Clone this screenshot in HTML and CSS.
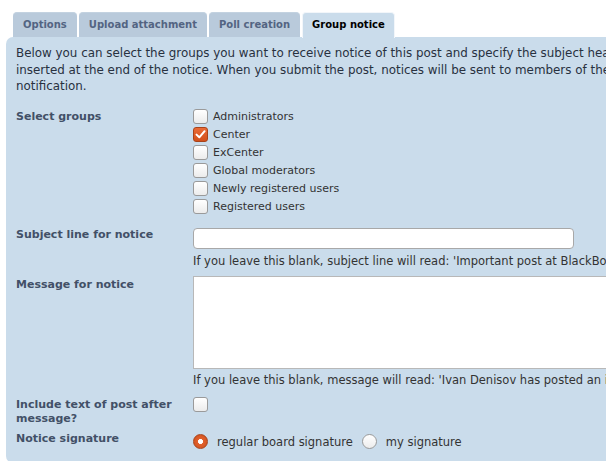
FILE: index.html
```html
<!DOCTYPE html>
<html>
<head>
<meta charset="utf-8">
<link rel="stylesheet" href="styles.css">
</head>
<body>
<div class="page">
  <ul class="tabs">
    <li class="tab">Options</li>
    <li class="tab">Upload attachment</li>
    <li class="tab">Poll creation</li>
    <li class="tab active">Group notice</li>
  </ul>
  <div class="panel">
    <p class="intro">Below you can select the groups you want to receive notice of this post and specify the subject heading and message text. A link to the post will be<br>inserted at the end of the notice. When you submit the post, notices will be sent to members of the selected groups who have chosen to receive<br>notification.</p>

    <div class="row row-groups">
      <div class="label">Select groups</div>
      <div class="value">
        <div class="opt"><span class="cb"></span>Administrators</div>
        <div class="opt"><span class="cb checked"><svg viewBox="0 0 15 15" width="15" height="15"><path d="M3.5 7.6 L6.3 10.3 L11.6 4.2" fill="none" stroke="#fff" stroke-width="2" stroke-linecap="round" stroke-linejoin="round"/></svg></span>Center</div>
        <div class="opt"><span class="cb"></span>ExCenter</div>
        <div class="opt"><span class="cb"></span>Global moderators</div>
        <div class="opt"><span class="cb"></span>Newly registered users</div>
        <div class="opt"><span class="cb"></span>Registered users</div>
      </div>
    </div>

    <div class="row row-subject">
      <div class="label">Subject line for notice</div>
      <div class="value">
        <div class="input"></div>
        <div class="hint">If you leave this blank, subject line will read: 'Important post at BlackBox Component Builder'</div>
      </div>
    </div>

    <div class="row row-message">
      <div class="label">Message for notice</div>
      <div class="value">
        <div class="textarea"></div>
        <div class="hint">If you leave this blank, message will read: 'Ivan Denisov has posted an important message at BlackBox Component Builder'</div>
      </div>
    </div>

    <div class="row row-include">
      <div class="label two">Include text of post after message?</div>
      <div class="value">
        <span class="cb"></span>
      </div>
    </div>

    <div class="row row-sig">
      <div class="label two">Notice signature</div>
      <div class="value radios">
        <span class="rb on"></span><span class="rtext">regular board signature</span>
        <span class="rb"></span><span class="rtext">my signature</span>
      </div>
    </div>
  </div>
</div>
</body>
</html>
```
FILE: styles.css
```css
html, body {
  margin: 0;
  padding: 0;
  overflow: hidden;
  background: #fff;
}
body {
  font-family: "DejaVu Sans", Verdana, sans-serif;
  font-size: 11px;
  color: #28313f;
}
.page {
  width: 1000px;
  padding-top: 12px;
}
.tabs {
  list-style: none;
  margin: 0 0 0 13px;
  padding: 0;
  display: flex;
  gap: 2px;
  height: 25px;
  align-items: flex-end;
}
.tab {
  height: 25px;
  box-sizing: border-box;
  padding: 0 10px;
  line-height: 24px;
  font-size: 10px;
  font-weight: bold;
  color: #536482;
  background: #b9cadb;
  border-radius: 4px 4px 0 0;
  border-top: 1px solid #c3d2e0;
}
.tab.active {
  height: 26px;
  margin-bottom: -1px;
  padding: 0 9px;
  line-height: 24px;
  color: #000;
  background: #cadceb;
  border: 1px solid #f2f6fa;
  border-bottom: none;
  position: relative;
  z-index: 1;
}
.panel {
  margin-left: 6px;
  background: #cadceb;
  border-radius: 7px;
  padding: 8px 10px 13px 10px;
}
.intro {
  margin: 0 0 13px 0;
  font-size: 11.9px;
  line-height: 16.5px;
  white-space: nowrap;
  color: #28313f;
}
.row {
  display: grid;
  grid-template-columns: 177px 1fr;
}
.label {
  font-weight: bold;
  color: #425067;
  line-height: 16px;
}
.label.two {
  line-height: 14.5px;
  width: 165px;
}
.row-groups .label { margin-top: 1px; }
.opt {
  display: flex;
  align-items: center;
  height: 18px;
  color: #333;
}
.cb {
  width: 15px;
  height: 15px;
  box-sizing: border-box;
  border: 1px solid #9a9a9a;
  border-radius: 3px;
  background: linear-gradient(#ffffff, #ececec);
  margin-right: 5px;
  display: inline-block;
  flex: none;
}
.cb svg { display: block; margin: -1px; }
.cb.checked {
  background: linear-gradient(#ea6a35, #d2501c);
  border-color: #a8431a;
}
.row-subject { margin-top: 11px; }
.row-subject .input {
  margin-top: 1px;
  width: 381px;
  height: 21px;
  box-sizing: border-box;
  border: 1px solid #a8a8a8;
  border-radius: 4px;
  background: #fff;
}
.hint {
  white-space: nowrap;
  font-size: 11.5px;
  line-height: 16px;
  color: #333;
}
.row-subject .hint { margin-top: 4px; }
.row-message { margin-top: 7px; }
.row-message .label { padding-top: 1px; }
.row-message .textarea {
  margin-top: 0;
  width: 600px;
  height: 93px;
  box-sizing: border-box;
  border: 1px solid #b8b8b8;
  background: #fff;
}
.row-message .hint { margin-top: 3px; }
.row-include { margin-top: 10px; }
.row-include .cb { margin-top: -1px; }
.row-sig { margin-top: 5px; }
.radios {
  display: flex;
  align-items: center;
  height: 16px;
  margin-top: 2px;
  color: #333;
  font-size: 11.5px;
}
.rb {
  width: 15px;
  height: 15px;
  box-sizing: border-box;
  border-radius: 50%;
  border: 1px solid #9a9a9a;
  background: linear-gradient(#fff, #ececec);
  margin-right: 9px;
  flex: none;
}
.rb.on {
  background: radial-gradient(circle, #fff 0 2.2px, #e0602c 2.8px, #cf4f1b 100%);
  border-color: #a8431a;
}
.rtext {
  margin-right: 9px;
}
```
